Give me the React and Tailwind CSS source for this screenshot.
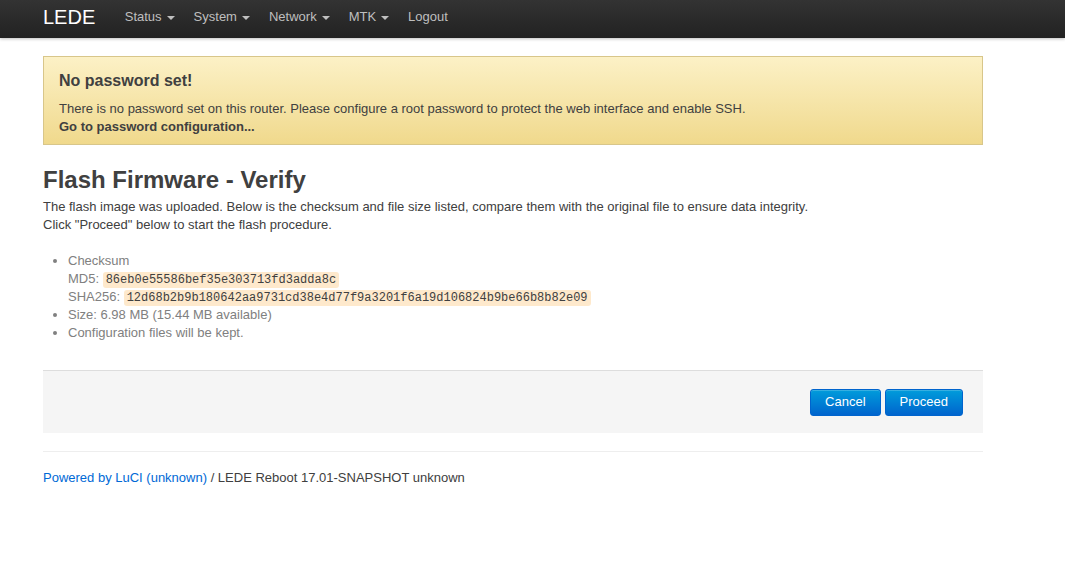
import React from "react";

const mono = { fontFamily: '"Liberation Mono", "Courier New", monospace' };

const NavItem = ({ label, caret = true }) => (
  <a href="#" className="flex items-center px-[9.5px] h-[38px] pb-[4px] text-[13px] text-[#bfbfbf]">
    {label}
    {caret && <span className="ml-[5px] mt-[1px] w-0 h-0 border-l-[4px] border-r-[4px] border-t-[4px] border-l-transparent border-r-transparent border-t-[#bfbfbf]" />}
  </a>
);

const Code = ({ children }) => (
  <code className="bg-[#fee9cc] text-[#404040] text-[12px] leading-[14px] px-[3px] py-[1px] rounded-[3px] inline-block align-baseline" style={mono}>{children}</code>
);

export default function App(){
  return (
    <div className="min-h-[587px] bg-white text-[13px] leading-[18px] text-[#404040]" style={{ fontFamily: '"Liberation Sans", Arial, sans-serif' }}>
      <div className="h-[38px] bg-gradient-to-b from-[#333333] to-[#222222] shadow-[0_1px_3px_rgba(0,0,0,0.25)]">
        <div className="w-[940px] ml-[43px] flex items-center h-full">
          <a href="#" className="text-[20px] text-white mr-[20px] -mt-[4px]">LEDE</a>
          <nav className="flex items-center">
            <NavItem label="Status" />
            <NavItem label="System" />
            <NavItem label="Network" />
            <NavItem label="MTK" />
            <NavItem label="Logout" caret={false} />
          </nav>
        </div>
      </div>

      <div className="w-[940px] ml-[43px] pt-[18px]">
        <div className="border border-[#d8c68a] bg-gradient-to-b from-[#fcf1c6] to-[#f0d98c] px-[15px] pt-[15px] pb-[8px] text-[#404040]">
          <h4 className="text-[16px] font-bold leading-[18px] mb-[10px]">No password set!</h4>
          <p>There is no password set on this router. Please configure a root password to protect the web interface and enable SSH.</p>
          <a href="#" className="font-bold">Go to password configuration...</a>
        </div>

        <h2 className="text-[24px] font-bold leading-[36px] mt-[17px]">Flash Firmware - Verify</h2>
        <p>The flash image was uploaded. Below is the checksum and file size listed, compare them with the original file to ensure data integrity.<br />Click "Proceed" below to start the flash procedure.</p>

        <ul className="list-disc ml-[25px] mt-[18px] text-[#808080]">
          <li>Checksum<br />
            MD5: <Code>86eb0e55586bef35e303713fd3adda8c</Code><br />
            SHA256: <Code>12d68b2b9b180642aa9731cd38e4d77f9a3201f6a19d106824b9be66b8b82e09</Code>
          </li>
          <li>Size: 6.98 MB (15.44 MB available)</li>
          <li>Configuration files will be kept.</li>
        </ul>

        <div className="mt-[28px] bg-[#f5f5f5] border-t border-[#dddddd] h-[63px] flex items-center justify-end pr-[20px] gap-[4px]">
          <button className="h-[27px] px-[14px] rounded-[3px] border border-[#0064cd] bg-gradient-to-b from-[#049cdb] to-[#0064cd] text-white text-[13px] shadow-[inset_0_1px_0_rgba(255,255,255,0.2)]">Cancel</button>
          <button className="h-[27px] px-[14px] rounded-[3px] border border-[#0064cd] bg-gradient-to-b from-[#049cdb] to-[#0064cd] text-white text-[13px] shadow-[inset_0_1px_0_rgba(255,255,255,0.2)]">Proceed</button>
        </div>

        <footer className="mt-[18px] border-t border-[#eeeeee] pt-[17px]">
          <a href="#" className="text-[#0069d6]">Powered by LuCI (unknown)</a> / LEDE Reboot 17.01-SNAPSHOT unknown
        </footer>
      </div>
    </div>
  );
}
